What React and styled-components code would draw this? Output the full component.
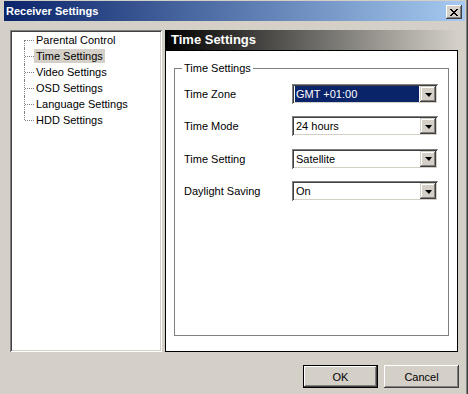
import React from "react";
import styled, { createGlobalStyle } from "styled-components";

const GlobalStyle = createGlobalStyle`
  html, body {
    margin: 0;
    padding: 0;
    background: #d4d0c8;
  }
  body {
    font-family: "Liberation Sans", Arial, sans-serif;
    font-size: 11px;
    color: #000;
  }
`;

const settings = [
  { label: "Time Zone", value: "GMT +01:00", focused: true },
  { label: "Time Mode", value: "24 hours" },
  { label: "Time Setting", value: "Satellite" },
  { label: "Daylight Saving", value: "On" },
];

const pages = [
  "Parental Control",
  "Time Settings",
  "Video Settings",
  "OSD Settings",
  "Language Settings",
  "HDD Settings",
];

const App = () => {
  return (
    <>
      <GlobalStyle />
      <Window>
        <TitleBar>
          <Title>Receiver Settings</Title>
          <CloseButton>
            <svg width="8" height="7" viewBox="0 0 8 7">
              <path d="M0 0h2v1h1v1h2V1h1V0h2v1H7v1H6v1H5v1h1v1h1v1h1v1H6V6H5V5H3v1H2v1H0V6h1V5h1V4h1V3H2V2H1V1H0z" fill="#000" />
            </svg>
          </CloseButton>
        </TitleBar>

        <Main>
          <Tree>
            {pages.map((name, i) => (
              <TreeItem key={name}>
                <Connector $first={i === 0} $last={i === pages.length - 1} />
                <TreeLabel $selected={name === "Time Settings"}>{name}</TreeLabel>
              </TreeItem>
            ))}
          </Tree>

          <Panel>
            <PanelHeader>Time Settings</PanelHeader>
            <PanelBody>
              <Group>
                <Legend>Time Settings</Legend>
                <Form>
                  {settings.map((s) => (
                    <React.Fragment key={s.label}>
                      <FieldLabel>{s.label}</FieldLabel>
                      <Combo>
                        <ComboValue $focused={s.focused}>{s.value}</ComboValue>
                        <ComboButton>
                          <Arrow />
                        </ComboButton>
                      </Combo>
                    </React.Fragment>
                  ))}
                </Form>
              </Group>
            </PanelBody>
          </Panel>
        </Main>

        <Footer>
          <Button $default>OK</Button>
          <Button>Cancel</Button>
        </Footer>
      </Window>
    </>
  );
};

const Window = styled.div`
  box-sizing: border-box;
  width: 468px;
  height: 394px;
  padding: 1px 3px 0 4px;
  background: #d4d0c8;
  display: flex;
  flex-direction: column;
  box-shadow: inset 2px 0 #d4d0c8, inset 1px 0 #ffffff, inset -1px 0 #404040,
    inset -2px 0 #808080;
`;

const TitleBar = styled.div`
  height: 20px;
  flex: none;
  display: flex;
  align-items: flex-start;
  justify-content: space-between;
  padding: 0 3px 0 2px;
  background: linear-gradient(to right, #0a246a, #a6caf0);
`;

const Title = styled.span`
  color: #fff;
  font-weight: bold;
  font-size: 11px;
  line-height: 20px;
`;

const CloseButton = styled.div`
  box-sizing: border-box;
  width: 16px;
  height: 14px;
  margin-top: 4px;
  background: #d4d0c8;
  display: flex;
  align-items: center;
  justify-content: center;
  box-shadow: inset -1px -1px #404040, inset 1px 1px #ffffff,
    inset -2px -2px #808080, inset 2px 2px #d4d0c8;
`;

const Main = styled.div`
  display: flex;
  gap: 3px;
  padding: 9px 0 0 6px;
`;

const Tree = styled.div`
  box-sizing: border-box;
  width: 152px;
  height: 322px;
  background: #fff;
  padding: 2px 0 0 14px;
  box-shadow: inset 1px 1px #808080, inset -1px -1px #ffffff,
    inset 2px 2px #404040, inset -2px -2px #d4d0c8;
`;

const TreeItem = styled.div`
  height: 16px;
  display: flex;
  align-items: center;
`;

const Connector = styled.span`
  position: relative;
  width: 10px;
  height: 16px;
  flex: none;

  &::before {
    content: "";
    position: absolute;
    left: 0;
    top: ${(p) => (p.$first ? "8px" : "0")};
    bottom: ${(p) => (p.$last ? "8px" : "0")};
    border-left: 1px dotted #808080;
  }

  &::after {
    content: "";
    position: absolute;
    left: 1px;
    right: 0;
    top: 8px;
    border-top: 1px dotted #808080;
  }
`;

const TreeLabel = styled.span`
  line-height: 14px;
  padding: 0 2px;
  white-space: nowrap;
  background: ${(p) => (p.$selected ? "#d4d0c8" : "transparent")};
`;

const Panel = styled.div`
  width: 293px;
  height: 322px;
  display: flex;
  flex-direction: column;
`;

const PanelHeader = styled.div`
  height: 20px;
  flex: none;
  padding-left: 6px;
  color: #fff;
  font-weight: bold;
  font-size: 13px;
  line-height: 20px;
  background: linear-gradient(to right, #000000, #d4d0c8);
`;

const PanelBody = styled.div`
  flex: 1;
  display: flex;
  flex-direction: column;
  background: #fff;
  border: 1px solid #000;
`;

const Group = styled.fieldset`
  flex: 1;
  margin: 11px 8px 15px 8px;
  padding: 9px 0 0 7px;
  border: 1px solid #808080;
  min-width: 0;
`;

const Legend = styled.legend`
  padding: 0 2px;
  line-height: 13px;
  font-size: 11px;
`;

const Form = styled.div`
  display: grid;
  grid-template-columns: 108px 146px;
  grid-auto-rows: 20px;
  row-gap: 12.4px;
  margin-left: 2px;
`;

const FieldLabel = styled.span`
  align-self: center;
`;

const Combo = styled.div`
  box-sizing: border-box;
  display: flex;
  height: 20px;
  padding: 2px;
  background: #fff;
  box-shadow: inset 1px 1px #808080, inset -1px -1px #ffffff,
    inset 2px 2px #404040, inset -2px -2px #d4d0c8;
`;

const ComboValue = styled.span`
  flex: 1;
  margin: 0 1px 0 1px;
  padding-left: 1px;
  line-height: 16px;
  color: ${(p) => (p.$focused ? "#fff" : "#000")};
  background: ${(p) => (p.$focused ? "#0a246a" : "transparent")};
`;

const ComboButton = styled.span`
  box-sizing: border-box;
  width: 16px;
  height: 16px;
  display: flex;
  align-items: center;
  justify-content: center;
  background: #d4d0c8;
  box-shadow: inset -1px -1px #404040, inset 1px 1px #d4d0c8,
    inset -2px -2px #808080, inset 2px 2px #ffffff;
`;

const Arrow = styled.span`
  width: 0;
  height: 0;
  margin-top: 1px;
  border-left: 4px solid transparent;
  border-right: 3px solid transparent;
  border-top: 4px solid #000;
`;

const Footer = styled.div`
  display: flex;
  justify-content: flex-end;
  gap: 6px;
  padding: 13px 6px 0 0;
`;

const Button = styled.div`
  box-sizing: border-box;
  width: 75px;
  height: 23px;
  display: flex;
  align-items: center;
  justify-content: center;
  background: #d4d0c8;
  border: ${(p) => (p.$default ? "1px solid #000" : "none")};
  box-shadow: inset -1px -1px #404040, inset 1px 1px #ffffff,
    inset -2px -2px #808080, inset 2px 2px #d4d0c8;
`;

export default App;
